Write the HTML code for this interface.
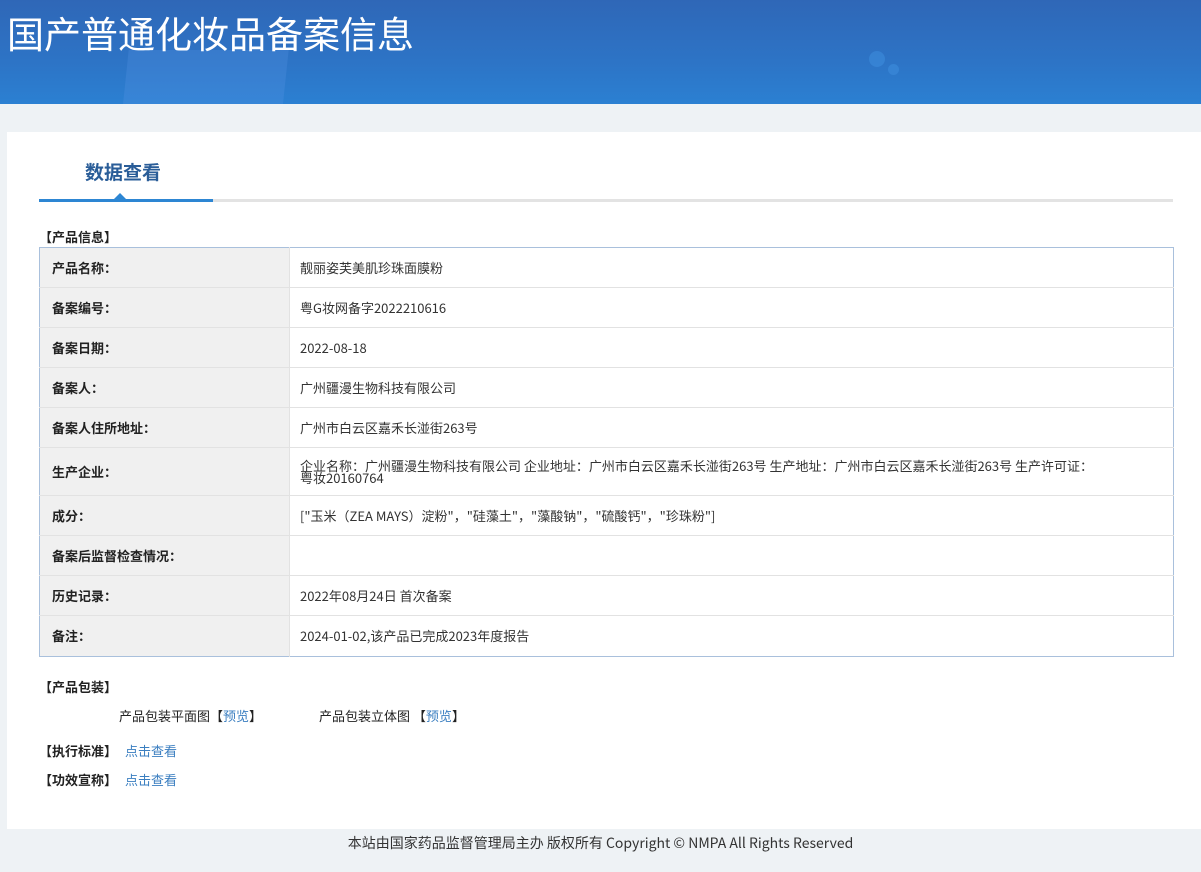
<!DOCTYPE html>
<html><head><meta charset="utf-8"><style>
*{margin:0;padding:0;box-sizing:border-box}
body{width:1201px;height:872px;background:#eef2f5;font-family:"Liberation Sans","Noto Sans CJK SC",sans-serif;color:#333;font-size:13px;position:relative;overflow:hidden}
.hdr{position:absolute;left:0;top:0;width:1201px;height:104px;background:linear-gradient(180deg,#2f67b7 0%,#2d74c6 60%,#2b80d2 100%);overflow:hidden}
.hdr .sh{position:absolute;left:125px;top:50px;width:160px;height:70px;background:rgba(90,150,230,.25);transform:skewX(-6deg)}
.hdr .d1{position:absolute;left:869px;top:51px;width:16px;height:16px;border-radius:50%;background:rgba(60,140,220,.6)}
.hdr .d2{position:absolute;left:888px;top:64px;width:11px;height:11px;border-radius:50%;background:rgba(60,140,220,.6)}
.hdr h1{position:absolute;left:7px;top:9px;font-size:37px;font-weight:normal;color:#fff;font-family:"Noto Sans CJK SC",sans-serif;line-height:46px}
.card{position:absolute;left:7px;top:132px;width:1194px;height:697px;background:#fff}
.tab{position:absolute;left:85px;top:159px;font-size:19px;font-weight:bold;color:#2a5d98;font-family:"Noto Sans CJK SC",sans-serif;line-height:26px}
.line{position:absolute;left:213px;top:199px;width:960px;height:3px;background:#e3e3e3}
.line2{position:absolute;left:39px;top:199px;width:174px;height:3px;background:#2d86d3}
.tri{position:absolute;left:114px;top:193px;width:0;height:0;border-left:6px solid transparent;border-right:6px solid transparent;border-bottom:6px solid #2d86d3}
.sec{position:absolute;font-weight:bold;color:#222;font-size:13px;font-family:"Noto Sans CJK SC",sans-serif}
table{position:absolute;left:39px;top:247px;width:1135px;border-collapse:collapse;border:1px solid #a9c0dc}
td{border-bottom:1px solid #e2e2e2;height:40px;font-size:13px;font-family:"Noto Sans CJK SC",sans-serif;line-height:14px}
td.l{width:250px;background:#f0f0f0;font-weight:bold;padding-left:12px;color:#222;border-right:1px solid #e2e2e2}
td.v{padding-left:10px;color:#333}
a{color:#3a7ec0;text-decoration:none}
.t{position:absolute;font-size:13px;font-family:"Noto Sans CJK SC",sans-serif;color:#222}
.t a.m{margin-left:8px}
.foot{position:absolute;left:0;top:833px;width:1201px;text-align:center;font-size:14px;color:#333;font-family:"Noto Sans CJK SC",sans-serif}
</style></head><body>
<div class="hdr"><div class="sh"></div><div class="d1"></div><div class="d2"></div><h1>国产普通化妆品备案信息</h1></div>
<div class="card"></div>
<div class="tab">数据查看</div>
<div class="line"></div><div class="line2"></div><div class="tri"></div>
<div class="sec" style="left:39px;top:227px">【产品信息】</div>
<table>
<tr><td class="l">产品名称：</td><td class="v">靓丽姿芙美肌珍珠面膜粉</td></tr>
<tr><td class="l">备案编号：</td><td class="v">粤G妆网备字2022210616</td></tr>
<tr><td class="l">备案日期：</td><td class="v">2022-08-18</td></tr>
<tr><td class="l">备案人：</td><td class="v">广州疆漫生物科技有限公司</td></tr>
<tr><td class="l">备案人住所地址：</td><td class="v">广州市白云区嘉禾长湴街263号</td></tr>
<tr><td class="l" style="height:48px">生产企业：</td><td class="v" style="line-height:12px">企业名称：广州疆漫生物科技有限公司 企业地址：广州市白云区嘉禾长湴街263号 生产地址：广州市白云区嘉禾长湴街263号 生产许可证：<br>粤妆20160764</td></tr>
<tr><td class="l">成分：</td><td class="v">["玉米（ZEA MAYS）淀粉"，"硅藻土"，"藻酸钠"，"硫酸钙"，"珍珠粉"]</td></tr>
<tr><td class="l">备案后监督检查情况：</td><td class="v"></td></tr>
<tr><td class="l">历史记录：</td><td class="v">2022年08月24日 首次备案</td></tr>
<tr><td class="l" style="border-bottom:none;height:41px">备注：</td><td class="v" style="border-bottom:none">2024-01-02,该产品已完成2023年度报告</td></tr>
</table>
<div class="sec" style="left:39px;top:677px">【产品包装】</div>
<div class="t" style="left:119px;top:706px">产品包装平面图【<a>预览</a>】</div>
<div class="t" style="left:319px;top:706px">产品包装立体图 【<a>预览</a>】</div>
<div class="t" style="left:39px;top:741px"><b>【执行标准】</b><a class="m">点击查看</a></div>
<div class="t" style="left:39px;top:770px"><b>【功效宣称】</b><a class="m">点击查看</a></div>
<div class="foot">本站由国家药品监督管理局主办 版权所有 Copyright © NMPA All Rights Reserved</div>
</body></html>
